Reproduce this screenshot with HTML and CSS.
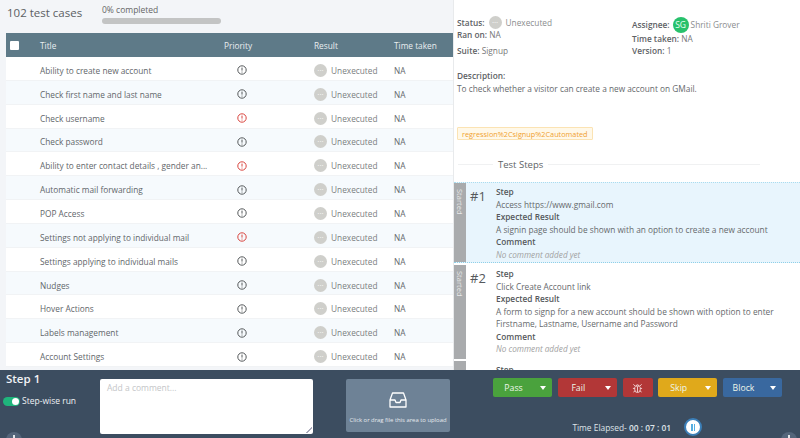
FILE: index.html
```html
<!DOCTYPE html>
<html lang="en">
<head>
<meta charset="utf-8">
<title>Test run</title>
<link rel="stylesheet" href="styles.css">
</head>
<body>
<svg class="defs" width="0" height="0">
  <symbol id="prio" viewBox="0 0 10 10"><circle cx="5" cy="5" r="4.2" fill="none" stroke="currentColor" stroke-width="1"/><path d="M5 2.6v3M5 6.6v.9" stroke="currentColor" stroke-width="1" fill="none"/></symbol>
</svg>
<div class="app">
  <main class="main">
    <section class="left">
      <div class="summary">
        <h1 class="count">102 test cases</h1>
        <div class="progress"><div class="pct">0% completed</div><div class="track"></div></div>
      </div>
      <div class="table">
        <div class="thead row-grid">
          <span class="check"></span><span>Title</span><span>Priority</span><span>Result</span><span>Time taken</span>
        </div>
        <div class="trow row-grid"><span></span><span>Ability to create new account</span><span class="c-prio"><svg class="pi"><use href="#prio"/></svg></span><span class="res"><i class="dot">···</i>Unexecuted</span><span>NA</span></div>
        <div class="trow alt row-grid"><span></span><span>Check first name and last name</span><span class="c-prio"><svg class="pi"><use href="#prio"/></svg></span><span class="res"><i class="dot">···</i>Unexecuted</span><span>NA</span></div>
        <div class="trow row-grid"><span></span><span>Check username</span><span class="c-prio"><svg class="pi high"><use href="#prio"/></svg></span><span class="res"><i class="dot">···</i>Unexecuted</span><span>NA</span></div>
        <div class="trow alt row-grid"><span></span><span>Check password</span><span class="c-prio"><svg class="pi"><use href="#prio"/></svg></span><span class="res"><i class="dot">···</i>Unexecuted</span><span>NA</span></div>
        <div class="trow row-grid"><span></span><span>Ability to enter contact details , gender an...</span><span class="c-prio"><svg class="pi high"><use href="#prio"/></svg></span><span class="res"><i class="dot">···</i>Unexecuted</span><span>NA</span></div>
        <div class="trow alt row-grid"><span></span><span>Automatic mail forwarding</span><span class="c-prio"><svg class="pi"><use href="#prio"/></svg></span><span class="res"><i class="dot">···</i>Unexecuted</span><span>NA</span></div>
        <div class="trow row-grid"><span></span><span>POP Access</span><span class="c-prio"><svg class="pi"><use href="#prio"/></svg></span><span class="res"><i class="dot">···</i>Unexecuted</span><span>NA</span></div>
        <div class="trow alt row-grid"><span></span><span>Settings not applying to individual mail</span><span class="c-prio"><svg class="pi high"><use href="#prio"/></svg></span><span class="res"><i class="dot">···</i>Unexecuted</span><span>NA</span></div>
        <div class="trow row-grid"><span></span><span>Settings applying to individual mails</span><span class="c-prio"><svg class="pi"><use href="#prio"/></svg></span><span class="res"><i class="dot">···</i>Unexecuted</span><span>NA</span></div>
        <div class="trow alt row-grid"><span></span><span>Nudges</span><span class="c-prio"><svg class="pi"><use href="#prio"/></svg></span><span class="res"><i class="dot">···</i>Unexecuted</span><span>NA</span></div>
        <div class="trow row-grid"><span></span><span>Hover Actions</span><span class="c-prio"><svg class="pi"><use href="#prio"/></svg></span><span class="res"><i class="dot">···</i>Unexecuted</span><span>NA</span></div>
        <div class="trow alt row-grid"><span></span><span>Labels management</span><span class="c-prio"><svg class="pi"><use href="#prio"/></svg></span><span class="res"><i class="dot">···</i>Unexecuted</span><span>NA</span></div>
        <div class="trow row-grid"><span></span><span>Account Settings</span><span class="c-prio"><svg class="pi"><use href="#prio"/></svg></span><span class="res"><i class="dot">···</i>Unexecuted</span><span>NA</span></div>
      </div>
    </section>
    <section class="right">
      <div class="meta">
        <div class="meta-col col-a">
          <div class="m-status"><b>Status:</b><i class="dot">···</i><span class="muted">Unexecuted</span></div>
          <div class="m-ran"><b>Ran on:</b> NA</div>
          <div class="m-suite"><b>Suite:</b> Signup</div>
        </div>
        <div class="meta-col">
          <div class="m-assignee"><b>Assignee:</b><i class="avatar">SG</i><span class="muted">Shriti Grover</span></div>
          <div class="m-time"><b>Time taken:</b> NA</div>
          <div class="m-version"><b>Version:</b> 1</div>
        </div>
      </div>
      <div class="desc">
        <b>Description:</b>
        <p>To check whether a visitor can create a new account on GMail.</p>
      </div>
      <div class="tag">regression%2Csignup%2Cautomated</div>
      <div class="steps-title"><span>Test Steps</span></div>
      <div class="step active">
        <div class="band"><span>Started</span></div>
        <div class="num">#1</div>
        <div class="body">
          <b>Step</b>
          <p>Access https://www.gmail.com</p>
          <b>Expected Result</b>
          <p>A signin page should be shown with an option to create a new account</p>
          <b>Comment</b>
          <em>No comment added yet</em>
        </div>
      </div>
      <div class="step">
        <div class="band"><span>Started</span></div>
        <div class="num">#2</div>
        <div class="body">
          <b>Step</b>
          <p>Click Create Account link</p>
          <b>Expected Result</b>
          <p>A form to signp for a new account should be shown with option to enter Firstname, Lastname, Username and Password</p>
          <b>Comment</b>
          <em>No comment added yet</em>
        </div>
      </div>
      <div class="step clipped">
        <div class="band"></div>
        <div class="num"></div>
        <div class="body"><b>Step</b></div>
      </div>
    </section>
  </main>
  <footer class="bottom">
    <div class="runinfo">
      <div class="steplabel">Step 1</div>
      <div class="toggle-row"><span class="toggle"></span>Step-wise run</div>
    </div>
    <div class="comment">Add a comment...</div>
    <div class="upload">
      <svg class="inbox" viewBox="0 0 18 16" width="18" height="16"><path d="M3.5 1h11L17 8v7H1V8zM1 8h5l1 2.500h4l1-2.500h5" fill="none" stroke="#fff" stroke-width="1.300" stroke-linejoin="round"/></svg>
      <span>Click or drag file this area to upload</span>
    </div>
    <div class="actions">
      <div class="btns">
        <div class="btn b-green w60"><span>Pass</span><i class="caret"></i></div>
        <div class="btn b-red w60"><span>Fail</span><i class="caret"></i></div>
        <div class="btn b-red bug"><svg viewBox="0 0 12 12" width="11" height="11"><path d="M4 4.500h4a2 2 0 0 1 1 1.500v2.500a3 3 0 0 1-6 0V6a2 2 0 0 1 1-1.500zM4.500 4.500a1.500 1.500 0 0 1 3 0M6 5v6M1.500 2.500l2 2M10.500 2.500l-2 2M1 7h2M9 7h2M1.500 11l2-1.500M10.500 11l-2-1.500" fill="none" stroke="#f3d8d8" stroke-width="1"/></svg></div>
        <div class="btn b-yellow w60"><span>Skip</span><i class="caret"></i></div>
        <div class="btn b-blue w60"><span>Block</span><i class="caret"></i></div>
      </div>
      <div class="timer">
        <span>Time Elapsed- <b>00 : 07 : 01</b></span>
        <span class="pause"><i></i><i></i></span>
      </div>
    </div>
    <span class="nav prev"></span>
    <span class="nav next"></span>
  </footer>
</div>
</body>
</html>
```

FILE: styles.css
```css
* { box-sizing: border-box; }
html, body { margin: 0; height: 100%; overflow: hidden; }
body { font-family: "Open Sans", sans-serif; font-size: 8.300px; color: #5b5f62; background: #fff; }
.defs { position: absolute; }
.app { width: 800px; height: 438px; display: flex; flex-direction: column; }
.main { height: 370px; display: flex; overflow: hidden; }

.left { width: 453px; background: #f3f5f8; padding: 0 0 0 6px; flex: none; }
.summary { height: 33px; display: flex; align-items: flex-start; }
.count { margin: 5px 0 0 1px; width: 95px; font-size: 11.500px; font-weight: 400; line-height: 16px; color: #5b6063; }
.pct { font-size: 8.500px; line-height: 12px; margin-top: 4px; color: #666; }
.track { width: 119px; height: 6px; margin-top: 2px; border-radius: 3px; background: #c3c4c4; }

.row-grid { display: grid; grid-template-columns: 34px 184px 90px 80px 59px; align-items: center; white-space: nowrap; }
.thead { height: 24px; background: #5e7a88; color: #e9eef0; }
.check { width: 9px; height: 9px; margin-left: 4px; border-radius: 1px; background: #fff; }
.trow { height: 23.850px; padding-top: 4px; background: #fff; border-bottom: 1px solid #f1f3f5; color: #62666a; }
.trow.alt { background: #f6fafd; }
.c-prio { padding-left: 13px; }
.pi { width: 10px; height: 10px; color: #55595b; display: block; }
.pi.high { color: #d9453f; }
.res { display: flex; align-items: center; color: #7b7e80; }
.dot { width: 13px; height: 13px; border-radius: 50%; background: #cfcfcb; color: #fff; font-style: normal; font-size: 8px; line-height: 12px; text-align: center; margin-right: 4px; flex: none; }

.right { flex: 1; background: #fff; border-left: 1px solid #e8eaec; padding-top: 16px; overflow: hidden; min-width: 0; }
.meta { display: flex; padding-left: 3px; height: 44px; }
.meta b, .desc b { font-weight: 600; color: #5e6265; }
.meta-col { line-height: 12px; color: #777; }
.col-a { width: 175px; }
.m-status, .m-assignee { display: flex; align-items: center; height: 13px; gap: 3px; }
.m-status .dot { margin: 0 1px; }
.muted { color: #8a8c8e; }
.m-suite { margin-top: 4px; }
.m-time { margin-top: 2px; }
.m-assignee { margin-top: 2px; }
.avatar { width: 16px; height: 16px; border-radius: 50%; background: #27c16c; color: #e9fff2; font-style: normal; text-align: center; line-height: 16px; font-size: 8.500px; flex: none; margin-right: -1px; }
.desc { margin-top: 10px; padding-left: 3px; line-height: 12.500px; height: 57px; }
.desc p { margin: 0; color: #66696c; }
.tag { width: fit-content; margin-left: 3px; height: 13px; padding: 0 4px; font-size: 7.300px; line-height: 12px; color: #f0a12f; background: #fff8e8; border: 1px solid #fbe3b3; border-radius: 1px; }
.steps-title { display: flex; align-items: center; gap: 5px; margin-top: 16px; height: 17px; padding: 0 40px 0 4px; font-size: 9.500px; font-weight: 500; color: #5e6265; }
.steps-title::before { content: ""; width: 35px; height: 1px; background: #f0f1f2; }
.steps-title::after { content: ""; flex: 1; height: 1px; background: #f0f1f2; }
.step { display: flex; height: 94px; margin-top: 2px; background: #fff; }
.step.active { height: 81px; margin-top: 9px; background: #e8f5fd; border-top: 1px dotted #a9dcef; border-bottom: 1px dotted #8fd0e8; }
.step.clipped { height: 20px; }
.band { width: 12px; background: #a9abad; color: #e8e8e8; font-size: 7.500px; flex: none; display: flex; justify-content: center; }
.band span { writing-mode: vertical-rl; padding-top: 6px; }
.num { width: 30px; padding: 3px 0 0 4px; font-size: 13px; line-height: 20px; color: #55595c; flex: none; }
.body { padding-top: 3px; line-height: 12.500px; color: #66696c; width: 300px; flex: none; }
.body b { font-weight: 600; color: #55595c; display: block; }
.body p { margin: 0; }
.body em { display: block; color: #a2a2a2; font-size: 8.200px; }

.bottom { position: relative; height: 68px; background: #3c4d60; display: flex; color: #eef1f4; overflow: hidden; }
.runinfo { width: 100px; padding: 1px 0 0 6px; flex: none; }
.steplabel { font-size: 11.500px; font-weight: 600; line-height: 15px; color: #f1f3f5; }
.toggle-row { display: flex; align-items: center; gap: 2px; margin-top: 10px; margin-left: -3px; font-size: 8.500px; line-height: 10px; }
.toggle { width: 17px; height: 9px; border-radius: 5px; background: #1fb57c; position: relative; flex: none; }
.toggle::after { content: ""; position: absolute; right: 1px; top: 1px; width: 7px; height: 7px; border-radius: 50%; background: #fff; }
.comment { width: 213px; height: 55px; margin-top: 9px; background: linear-gradient(135deg, transparent 50%, #aab 50%, #aab 62%, transparent 62%) no-repeat right 1px bottom 1px / 6px 6px, #fff; border-radius: 2px; padding: 2px 7px; color: #c4c6c8; font-size: 8.500px; line-height: 14px; flex: none; }
.upload { width: 104px; height: 53px; margin: 9px 0 0 33px; background: #6e8296; border-radius: 2px; display: flex; flex-direction: column; align-items: center; padding-top: 13px; color: #e6ebef; flex: none; }
.upload span { font-size: 5.900px; line-height: 8px; margin-top: 8px; white-space: nowrap; }
.actions { margin-left: 43px; padding-top: 8px; flex: none; }
.btns { display: flex; gap: 5.750px; }
.btn { height: 19px; border-radius: 2px; display: flex; align-items: center; color: #eef6ea; font-size: 8.700px; }
.w60 { width: 59px; }
.btn span { width: 41px; text-align: center; }
.b-green { background: #4aa23d; }
.b-red { background: #b23737; }
.b-yellow { background: #e0a91b; }
.b-blue { background: #39689f; }
.bug { width: 30px; justify-content: center; }
.caret { width: 0; height: 0; margin-left: auto; margin-right: 6px; border-left: 3px solid transparent; border-right: 3px solid transparent; border-top: 4px solid #fff; }
.timer { display: flex; align-items: center; justify-content: flex-end; margin-top: 21px; margin-right: 80px; font-size: 8.400px; gap: 13px; color: #dfe4e8; white-space: nowrap; }
.timer b { font-weight: 600; }
.pause { width: 18px; height: 18px; border-radius: 50%; background: #fff; border: 2px solid #3b7fb8; display: flex; align-items: center; justify-content: center; gap: 1px; flex: none; }
.pause i { width: 1.500px; height: 7px; background: #55aee0; }
.nav { position: absolute; width: 16px; height: 16px; border-radius: 50%; background: #54657a; top: 62px; }
.nav::after { content: ""; position: absolute; left: 7px; top: 3px; width: 2px; height: 4px; background: #dfe4e8; }
.prev { left: 6px; }
.next { right: 3px; }
```
